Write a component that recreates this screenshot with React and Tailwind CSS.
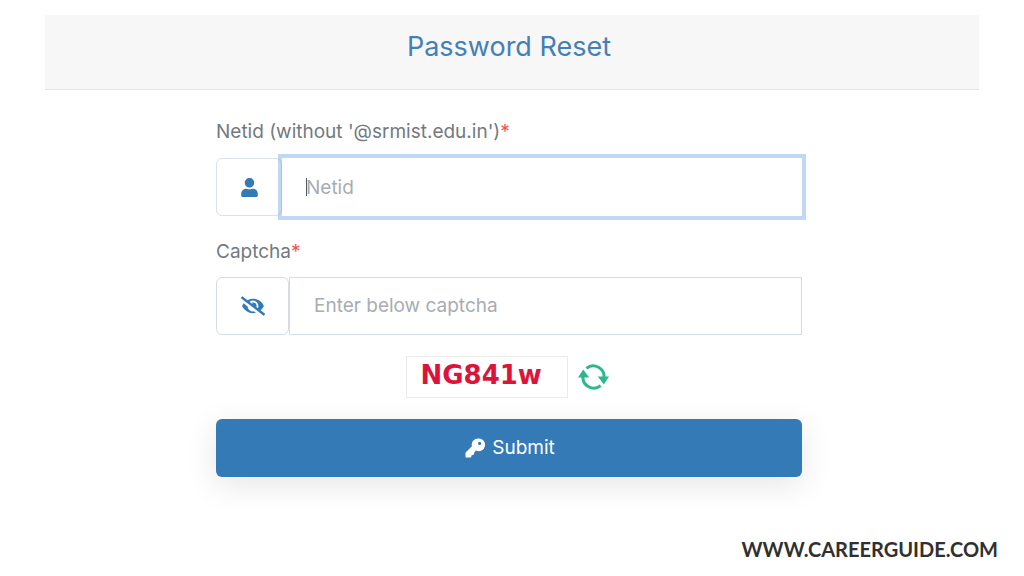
import { FaUser, FaEyeSlash } from "react-icons/fa";

function RefreshIcon() {
  return (
    <svg viewBox="0 0 31 26" className="h-[26px] w-[31px]" fill="none" stroke="#2bb88f" strokeWidth="3" aria-hidden="true">
      <path d="M8.4 4.4A10.8 10.8 0 0 1 26 14" />
      <path d="M22.6 21.6A10.8 10.8 0 0 1 5 12" />
      <path d="M19.8 12.4h11.2l-5.2 8.2zM0 13.6h11.2L5.2 5.4z" fill="#2bb88f" stroke="none" />
    </svg>
  );
}

function KeyIcon() {
  return (
    <svg viewBox="0 0 20 20" className="size-5" fill="currentColor" aria-hidden="true">
      <path
        fillRule="evenodd"
        d="M13.2 0.4a6.4 6.4 0 0 0-6.3 7.9L0.9 14.3a1.3 1.3 0 0 0-.4 1v3.1c0 .8.5 1.2 1.2 1.2h3c.9 0 1.4-.4 1.6-1.1l.3-1.2 1.4-.4c.6-.2 1-.5 1.1-1.1l.3-1.5 1.6-1.7a6.4 6.4 0 1 0 2.2-12.2zM14.6 3.8a1.6 1.6 0 1 1 0 3.2 1.6 1.6 0 0 1 0-3.2z"
      />
    </svg>
  );
}

function Label({ htmlFor, children }) {
  return (
    <label htmlFor={htmlFor} className="block text-[19px] leading-6 text-[#727a80]">
      {children}
      <span className="text-[#f0524f]">*</span>
    </label>
  );
}

export default function App() {
  return (
    <div className="flex min-h-screen flex-col bg-white font-['Inter',sans-serif]">
      <main className="mx-[45px] mt-[15px]">
        <header className="border-b border-[#e4e5e5] bg-[#f7f7f7] pt-[17px] pr-1.5 pb-[27px]">
          <h1 className="text-center text-[27px] leading-[30px] text-[#4480b6]">Password Reset</h1>
        </header>
        <form className="mx-auto flex w-full max-w-[592px] flex-col pt-[30px] pr-1.5" onSubmit={(e) => e.preventDefault()}>
          <Label htmlFor="netid">Netid (without '@srmist.edu.in')</Label>
          <div className="mt-[14px] flex h-[58px]">
            <span className="flex w-[66px] items-center justify-center rounded-md border border-[#d9e3ea]">
              <FaUser className="size-[19px] text-[#337ab7]" />
            </span>
            <div className="relative min-w-0 flex-1">
              <input id="netid" type="text" placeholder="Netid" className="h-full w-full px-6 text-[19px] text-[#495057] ring-4 ring-[#337ae0]/30 outline-none placeholder:text-[#a7adb3]" />
              <span className="absolute top-5 left-6 h-[18px] w-px bg-[#555b60]" aria-hidden="true" />
            </div>
          </div>
          <div className="mt-6">
            <Label htmlFor="captcha">Captcha</Label>
          </div>
          <div className="mt-[13px] flex h-[58px]">
            <span className="flex w-[73px] items-center justify-center rounded-md border border-[#d3dde3]">
              <FaEyeSlash className="size-6 text-[#337ab7]" />
            </span>
            <input id="captcha" type="text" placeholder="Enter below captcha" className="min-w-0 flex-1 border border-[#d3dde3] px-6 text-[19px] text-[#495057] outline-none placeholder:text-[#a7adb3]" />
          </div>
          <div className="mt-[21px] flex items-center justify-center gap-2.5 pr-1">
            <div className="flex h-[42px] w-[162px] items-start border border-[#ebebeb] px-3.5 font-['DejaVu_Sans',sans-serif] text-[26px] leading-9 font-bold text-[#dc143c]">NG841w</div>
            <button type="button" aria-label="Refresh captcha">
              <RefreshIcon />
            </button>
          </div>
          <button type="submit" className="mt-[21px] flex h-[58px] items-center justify-center gap-[7px] rounded-md bg-[#337ab7] pl-0.5 text-[19px] text-white shadow-[0_8px_32px_rgba(0,0,0,0.1)]">
            <KeyIcon />
            Submit
          </button>
        </form>
      </main>
      <footer className="mt-auto flex justify-end pr-[26px] pb-[15px]">
        <a href="https://www.careerguide.com" className="font-['Lato',sans-serif] text-xl leading-6 font-bold text-[#303030]">WWW.CAREERGUIDE.COM</a>
      </footer>
    </div>
  );
}
